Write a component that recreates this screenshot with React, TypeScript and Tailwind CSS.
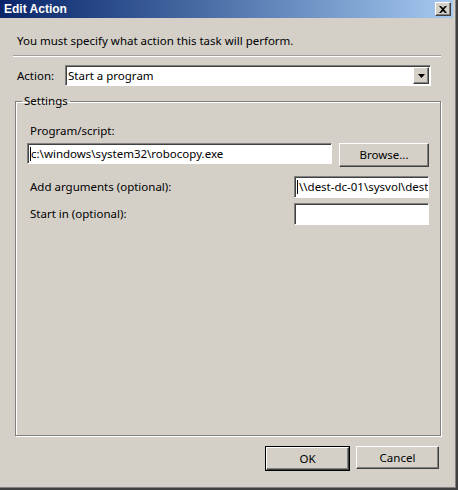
import React from "react";

const sunken =
  "bg-white border border-t-[#808080] border-l-[#808080] border-r-white border-b-white shadow-[inset_1px_1px_0_#404040]";
const raised =
  "bg-[#d4d0c8] border border-t-white border-l-white border-r-[#404040] border-b-[#404040] shadow-[inset_-1px_-1px_0_#808080]";

function CloseIcon() {
  return (
    <svg width="8" height="7" viewBox="0 0 8 7">
      <path d="M0 0h2l2 2 2-2h2L5 3.5 8 7H6L4 5 2 7H0l3-3.5z" fill="#000" />
    </svg>
  );
}

export default function EditAction() {
  return (
    <div
      className="w-[458px] h-[490px] flex flex-col bg-[#d4d0c8] border-r-2 border-b-2 border-[#404040] shadow-[inset_-1px_-1px_0_#808080] text-black text-[11.5px] leading-[16px] overflow-hidden"
      style={{ fontFamily: '"Noto Sans", "Open Sans", sans-serif' }}
    >
      {/* title bar */}
      <div className="h-[18px] mr-[3px] flex items-center justify-between bg-gradient-to-r from-[#0a246a] to-[#a6caf0] pl-[4px] pr-[2px]">
        <span
          className="text-white font-bold text-[12px]"
          style={{ fontFamily: '"Liberation Sans", Arial, sans-serif' }}
        >
          Edit Action
        </span>
        <button className={`w-[16px] h-[14px] flex items-center justify-center ${raised}`}>
          <CloseIcon />
        </button>
      </div>

      <p className="pl-[17px] pt-[15px]">You must specify what action this task will perform.</p>

      <div className="mt-[6px] ml-[13px] w-[428px] h-[2px] border-t border-t-[#a0a0a0] border-b border-b-white" />

      {/* action */}
      <div className="mt-[8px] flex items-center">
        <span className="pl-[17px] w-[65px]">Action:</span>
        <div className={`w-[366px] h-[21px] flex items-center justify-between pl-[2px] pr-[1px] ${sunken}`}>
          <span>Start a program</span>
          <div className={`w-[16px] h-[17px] flex items-center justify-center ${raised}`}>
            <svg width="7" height="4" viewBox="0 0 7 4">
              <path d="M0 0h7L3.5 4z" fill="#000" />
            </svg>
          </div>
        </div>
      </div>

      {/* settings group */}
      <fieldset className="mt-[7px] ml-[15px] w-[426px] h-[343px] border border-[#808080] shadow-[inset_1px_1px_0_white,1px_1px_0_white]">
        <legend className="ml-[6px] px-[2px]">Settings</legend>

        <div className="mt-[14px] pl-[14px]">Program/script:</div>
        <div className="mt-[4px] pl-[11px] flex items-start">
          <div className={`w-[305px] h-[21px] flex items-center pl-[2px] whitespace-nowrap overflow-hidden ${sunken}`}>
            <span className="w-px h-[14px] bg-black" />
            c:\windows\system32\robocopy.exe
          </div>
          <button className={`ml-[7px] w-[90px] h-[24px] ${raised}`}>Browse...</button>
        </div>

        <div className="mt-[9px] pl-[14px] pr-[11px] flex items-center justify-between">
          <span>Add arguments (optional):</span>
          <div className={`w-[135px] h-[22px] flex items-center pl-[2px] whitespace-nowrap overflow-hidden ${sunken}`}>
            <span className="w-px h-[14px] bg-black mr-[1px] shrink-0" />
            \\dest-dc-01\sysvol\destination
          </div>
        </div>

        <div className="mt-[5px] pl-[14px] pr-[11px] flex items-center justify-between">
          <span>Start in (optional):</span>
          <div className={`w-[135px] h-[22px] ${sunken}`} />
        </div>
      </fieldset>

      {/* footer buttons */}
      <div className="mt-[10px] pr-[17px] flex justify-end gap-[6px]">
        <button className="w-[85px] h-[25px] border border-black">
          <div className={`w-full h-full flex items-center justify-center ${raised}`}>OK</div>
        </button>
        <button className={`w-[83px] h-[23px] ${raised}`}>Cancel</button>
      </div>
    </div>
  );
}
